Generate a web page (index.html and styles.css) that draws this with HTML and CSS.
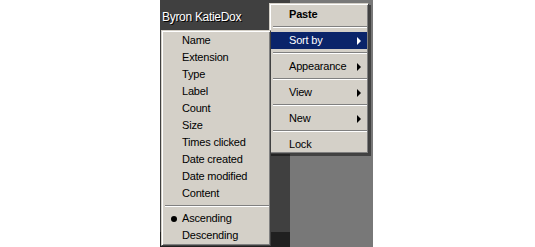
FILE: index.html
```html
<!DOCTYPE html>
<html lang="en">
<head>
    <meta charset="UTF-8" />
    <meta name="viewport" content="width=device-width, initial-scale=1.0" />
    <title>Sort by</title>
    <link rel="stylesheet" href="styles.css">
</head>
<body>

<div class="desktop">
    <div class="panel-dark">
        <div class="title">Byron KatieDox</div>
        <div class="panel-fill"></div>
        <div class="panel-foot"></div>
    </div>
    <div class="panel-gray"></div>
</div>

<ul class="menu main-menu">
    <li class="bold">Paste</li>
    <li class="sep"></li>
    <li class="sub active">Sort by</li>
    <li class="sep"></li>
    <li class="sub">Appearance</li>
    <li class="sep"></li>
    <li class="sub">View</li>
    <li class="sep"></li>
    <li class="sub">New</li>
    <li class="sep"></li>
    <li>Lock</li>
</ul>

<ul class="menu sort-menu">
    <li>Name</li>
    <li>Extension</li>
    <li>Type</li>
    <li>Label</li>
    <li>Count</li>
    <li>Size</li>
    <li>Times clicked</li>
    <li>Date created</li>
    <li>Date modified</li>
    <li>Content</li>
    <li class="sep"></li>
    <li class="checked">Ascending</li>
    <li>Descending</li>
</ul>

</body>
</html>
```

FILE: styles.css
```css
/* General */
body {
    margin: 0;
    background: #ffffff;
    font-family: "Liberation Sans", Arial, sans-serif;
    font-size: 11px;
    color: #000;
}

/* Desktop behind the menus */
.desktop {
    display: flex;
    width: 213px;
    height: 247px;
    margin-left: 160px;
}

.panel-dark {
    width: 130px;
    display: flex;
    flex-direction: column;
    background: #404040;
}

.title {
    color: #ffffff;
    font-size: 12px;
    line-height: 14px;
    padding: 10px 0 0 2px;
    letter-spacing: -0.3px;
    text-shadow: 1px 1px 0 #000;
}

.panel-fill {
    flex: 1;
}

.panel-foot {
    height: 15px;
    background: #202020;
}

.panel-gray {
    flex: 1;
    background: #787878;
}

/* Menus */
.menu {
    position: absolute;
    margin: 0;
    list-style: none;
    background: #d4d0c8;
    border: 1px solid;
    border-color: #d4d0c8 #404040 #404040 #d4d0c8;
    box-shadow: inset 1px 1px #ffffff, inset -1px -1px #808080;
    letter-spacing: -0.2px;
}

.menu li {
    height: 17px;
    line-height: 17px;
    white-space: nowrap;
}

.menu li.sep {
    height: 2px;
    box-sizing: border-box;
    border-top: 1px solid #808080;
    border-bottom: 1px solid #ffffff;
    margin: 3px 0 3px 2px;
}

.main-menu {
    left: 269px;
    top: 3px;
    width: 96px;
    padding: 2px 1px 0;
    box-shadow: inset 1px 1px #ffffff, inset -1px -1px #808080, 2px 2px 0 rgba(0, 0, 0, 0.45);
    z-index: 1;
}

.main-menu li {
    display: flex;
    justify-content: space-between;
    align-items: center;
    padding: 0 6px 0 18px;
}

.main-menu li.sep {
    padding: 0;
    margin: 3px 0 4px 2px;
}

.main-menu li.bold {
    font-weight: bold;
}

.main-menu li.sub::after {
    content: "";
    width: 0;
    height: 0;
    border-left: 4px solid currentColor;
    border-top: 4px solid transparent;
    border-bottom: 4px solid transparent;
}

.main-menu li.active {
    background: #0a246a;
    color: #ffffff;
}

.sort-menu {
    left: 161px;
    top: 30px;
    width: 106px;
    padding: 1px;
    z-index: 2;
}

.sort-menu li {
    padding-left: 19px;
}

.sort-menu li.sep {
    padding: 0;
}

.sort-menu li.checked::before {
    content: "";
    display: inline-block;
    width: 6px;
    height: 6px;
    border-radius: 50%;
    background: #000;
    margin: 0 5px 0 -11px;
    vertical-align: middle;
}
```
